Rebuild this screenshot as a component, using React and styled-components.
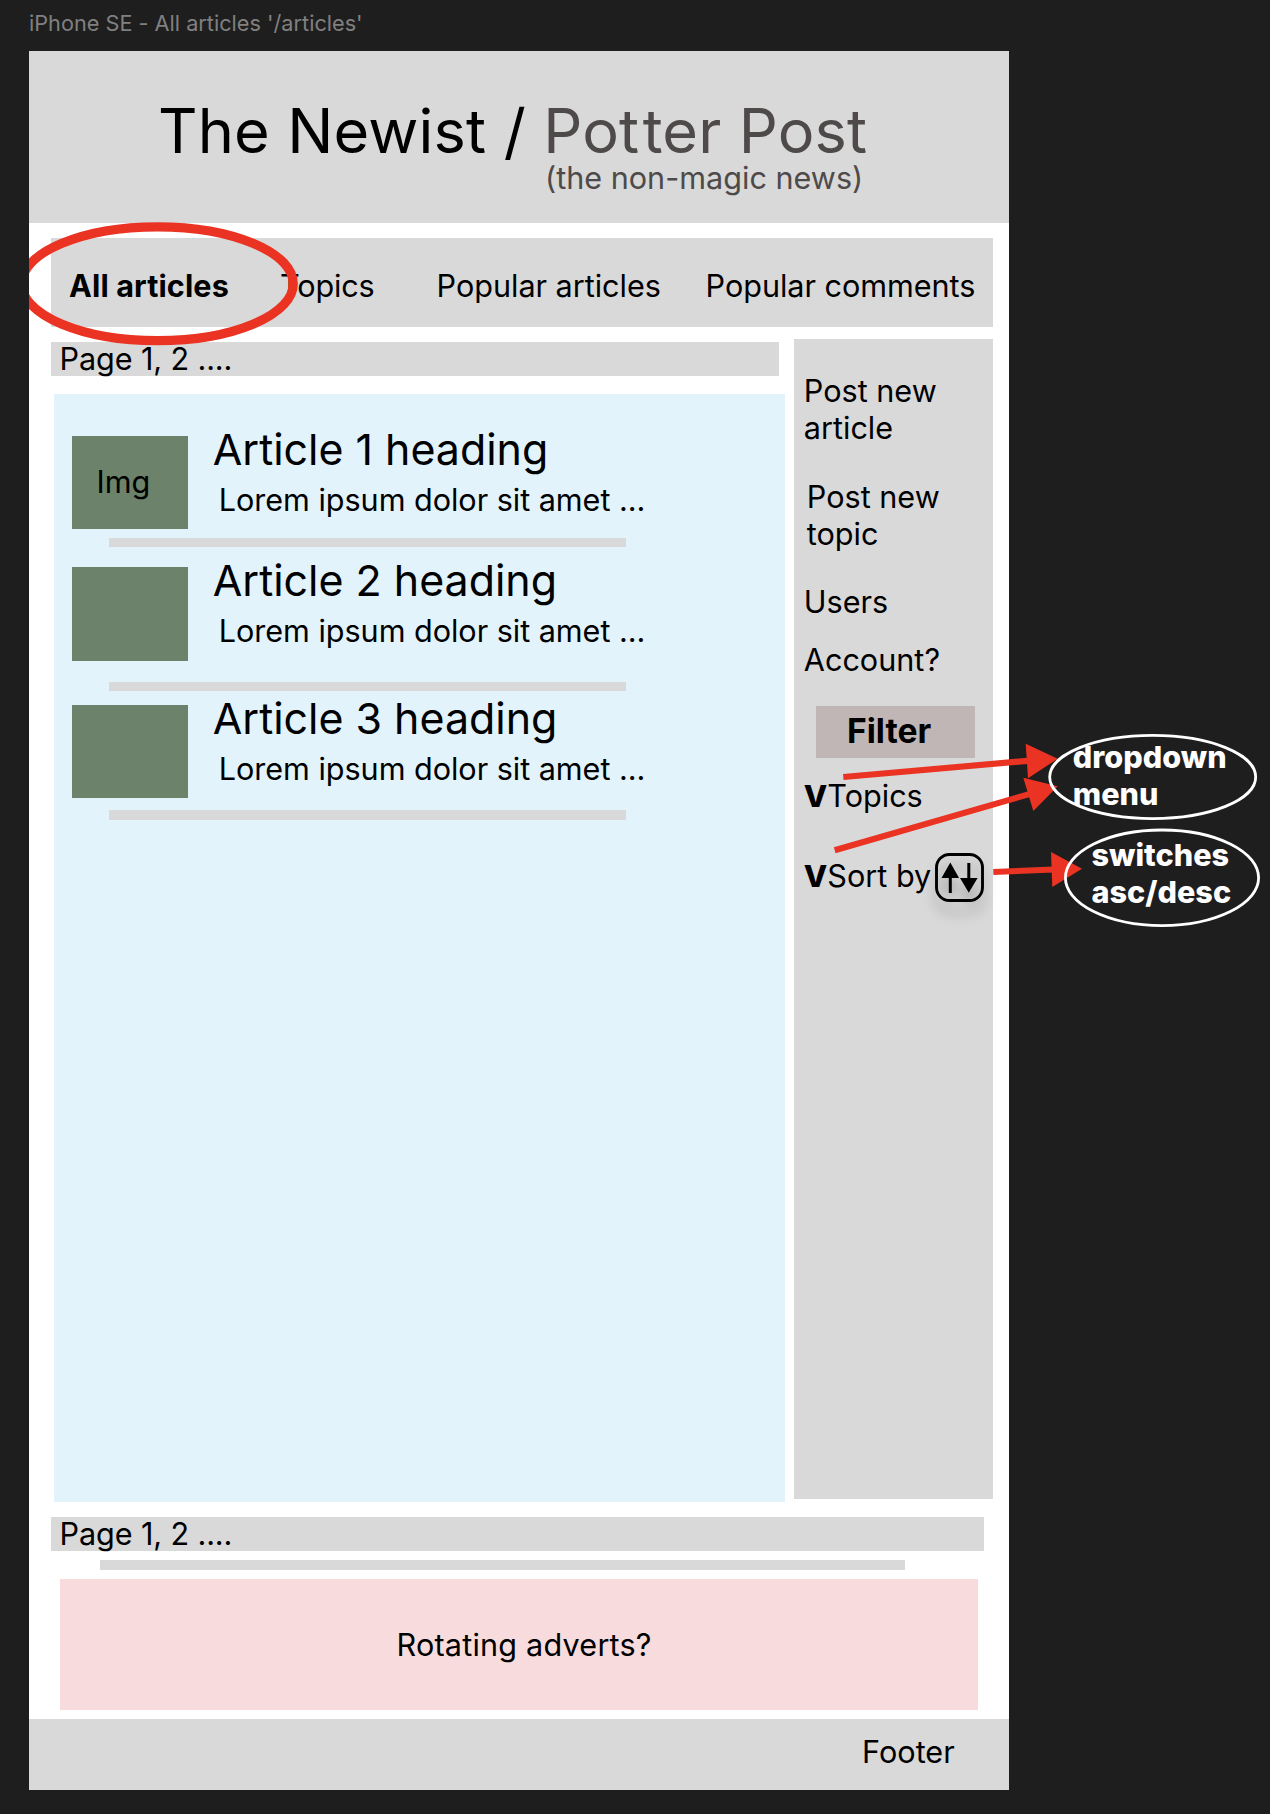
import React from "react";
import styled, { createGlobalStyle } from "styled-components";

const GlobalStyle = createGlobalStyle`
  * { box-sizing: border-box; }
  html, body { margin: 0; background: #1e1e1e; }
  body {
    font-family: Inter, "Liberation Sans", sans-serif;
    font-size: 30.6px;
    line-height: 37px;
    color: #000;
    font-optical-sizing: none;
    font-variant-ligatures: none;
  }
`;

const Canvas = styled.div`
  position: relative;
  width: 1270px;
  height: 1814px;
  padding: 10px 0 0 29px;
  overflow: hidden;
`;

const FrameLabel = styled.div`
  height: 41px;
  font-size: 21.7px;
  line-height: 26px;
  color: #808080;
  white-space: nowrap;
`;

const Frame = styled.div`
  position: relative;
  display: flex;
  flex-direction: column;
  width: 980px;
  height: 1739px;
  background: #fff;
  overflow: hidden;
`;

const Header = styled.header`
  display: flex;
  flex-direction: column;
  height: 171.7px;
  padding: 47.5px 0 0 129px;
  background: #d9d9d9;
`;

const Title = styled.h1`
  margin: 0;
  font-size: 61.25px;
  line-height: 65px;
  font-weight: 400;
  letter-spacing: 0.15px;
  white-space: nowrap;
`;

const AltTitle = styled.span`
  color: #4f4a4a;
`;

const Spaced = styled.span`
  letter-spacing: 3.6px;
`;

const Tagline = styled.div`
  margin: -4.5px 0 0 387px;
  color: #4f4a4a;
`;

const Nav = styled.nav`
  display: flex;
  align-items: center;
  height: 88.7px;
  margin: 15.3px 15.6px 0 21.6px;
  padding: 6px 0 0 18.5px;
  background: #d9d9d9;
`;

const NavItem = styled.a`
  width: ${(p) => p.$width}px;
  flex: none;
  font-weight: ${(p) => (p.$active ? 700 : 400)};
  letter-spacing: ${(p) => p.$tracking || 0}px;
  white-space: nowrap;
`;

const Body = styled.div`
  display: flex;
  justify-content: space-between;
  margin: 12.3px 15.6px 0 21.6px;
  height: 1163px;
`;

const Main = styled.main`
  display: flex;
  flex-direction: column;
  padding-top: 3px;
`;

const Pager = styled.div`
  flex: none;
  width: ${(p) => p.$width}px;
  height: 33.7px;
  margin: ${(p) => p.$margin || 0};
  padding-left: 9px;
  line-height: 33px;
  letter-spacing: -0.12px;
  background: #d9d9d9;
`;

const ArticleList = styled.section`
  width: 731px;
  height: 1108px;
  margin: 18.3px 0 0 3.4px;
  padding: 33px 0 0 18px;
  background: #e2f3fc;
`;

const Article = styled.article`
  display: flex;
  height: ${(p) => p.$height}px;
`;

const Thumb = styled.div`
  width: 116.2px;
  height: 93.5px;
  margin: 9px 24.6px 0 0;
  padding: 27px 0 0 24.5px;
  background: #6c826b;
`;

const Heading = styled.h2`
  margin: -4.3px 0 0;
  font-size: 42.9px;
  line-height: 52px;
  font-weight: 400;
`;

const Excerpt = styled.p`
  margin: 6.3px 0 0 6px;
  letter-spacing: -0.04px;
`;

const Divider = styled.div`
  flex: none;
  width: ${(p) => p.$width}px;
  height: 9.3px;
  margin: ${(p) => p.$margin};
  background: #d9d9d9;
`;

const Sidebar = styled.aside`
  display: flex;
  flex-direction: column;
  width: 199.5px;
  height: 1160.3px;
  padding: 33.2px 0 0 9.9px;
  background: #d9d9d9;
`;

const SideItem = styled.a`
  width: 150px;
  margin: 0 0 ${(p) => p.$gap}px ${(p) => p.$indent || 0}px;
`;

const FilterButton = styled.div`
  width: 159px;
  height: 52px;
  margin: 0 0 19px 12.1px;
  padding-left: 31px;
  font-size: 33.7px;
  line-height: 50px;
  font-weight: 700;
  background: #c0b6b6;
`;

const FilterRow = styled.div`
  display: flex;
  align-items: flex-start;
  height: 79.6px;
  white-space: nowrap;
`;

const Caret = styled.span`
  width: 23.5px;
  font-weight: 800;
`;

const SortIcon = styled.svg`
  flex: none;
  width: 49px;
  height: 49px;
  margin: -4px 0 0 4px;
  overflow: visible;
  filter: drop-shadow(0 12.25px 6px rgba(0, 0, 0, 0.25));
`;

const Adverts = styled.section`
  display: flex;
  flex: none;
  align-items: center;
  height: 131.3px;
  margin: 9px 31px 9.3px;
  padding: 0 0 0 336.5px;
  letter-spacing: 0.2px;
  background: #f8dcdd;
`;

const Footer = styled.footer`
  flex: 1;
  padding: 13.5px 54.3px 0 0;
  text-align: right;
  background: #d9d9d9;
`;

const Highlight = styled.svg`
  position: absolute;
  left: 0;
  top: 165px;
`;

const Notes = styled.svg`
  position: absolute;
  left: 820px;
  top: 720px;
`;

const NoteText = styled.div`
  position: absolute;
  left: ${(p) => p.$left}px;
  top: ${(p) => p.$top}px;
  color: #fff;
  font-weight: 800;
`;

const articles = [
  { title: "Article 1 heading", img: "Img", height: 111, after: 11 },
  { title: "Article 2 heading", img: "", height: 123.9, after: 4.5 },
  { title: "Article 3 heading", img: "", height: 114.3, after: 0 },
];

export default function App() {
  return (
    <Canvas>
      <GlobalStyle />
      <FrameLabel>iPhone SE - All articles '/articles'</FrameLabel>
      <Frame>
        <Header>
          <Title>
            The Newist / <AltTitle>Po<Spaced>t</Spaced>ter Post</AltTitle>
          </Title>
          <Tagline>(the non-magic news)</Tagline>
        </Header>
        <Nav>
          <NavItem $active $width={211} $tracking={0.1}>All articles</NavItem>
          <NavItem $width={156.5} $tracking={-0.2}>Topics</NavItem>
          <NavItem $width={269} $tracking={-0.03}>Popular articles</NavItem>
          <NavItem $width={270} $tracking={-0.04}>Popular comments</NavItem>
        </Nav>
        <Body>
          <Main>
            <Pager $width={728.4}>Page 1, 2 ....</Pager>
            <ArticleList>
              {articles.map((a) => (
                <React.Fragment key={a.title}>
                  <Article $height={a.height}>
                    <Thumb>{a.img}</Thumb>
                    <div>
                      <Heading>{a.title}</Heading>
                      <Excerpt>Lorem ipsum dolor sit amet ...</Excerpt>
                    </div>
                  </Article>
                  <Divider $width={517} $margin={`0 0 ${a.after}px 37px`} />
                </React.Fragment>
              ))}
            </ArticleList>
          </Main>
          <Sidebar>
            <SideItem $gap={32}>Post new article</SideItem>
            <SideItem $gap={30.5} $indent={3}>Post new topic</SideItem>
            <SideItem $gap={21}>Users</SideItem>
            <SideItem $gap={28.4}>Account?</SideItem>
            <FilterButton>Filter</FilterButton>
            <FilterRow>
              <Caret>V</Caret>Topics
            </FilterRow>
            <FilterRow>
              <Caret>V</Caret>Sort by
              <SortIcon viewBox="0 0 49 49">
                <rect x="1.5" y="1.5" width="46" height="46" rx="13" fill="none" stroke="#000" strokeWidth="2.9" />
                <path d="M15.3 25v15M33.8 10v15" stroke="#000" strokeWidth="3" />
                <path d="M15.3 9.5l8.8 15.5H6.5zM33.8 39.8L25 25h17.6z" />
              </SortIcon>
            </FilterRow>
          </Sidebar>
        </Body>
        <Pager $width={933.6} $margin="15.3px 0 0 21.6px">Page 1, 2 ....</Pager>
        <Divider $width={805} $margin="9.3px 0 0 70.7px" />
        <Adverts>Rotating adverts?</Adverts>
        <Footer>Footer</Footer>
        <Highlight width="280" height="135" viewBox="29 216 280 135">
          <ellipse cx="157.5" cy="283.7" rx="135.8" ry="56.9" fill="none" stroke="#ea3323" strokeWidth="9.2" />
        </Highlight>
      </Frame>
      <Notes width="450" height="220" viewBox="820 720 450 220">
        <g stroke="#ea3323" strokeWidth="6.1">
          <path d="M843.3 777L1030 760.6M834.7 850.3L1031 793.6M993.3 872L1054 869.5" />
        </g>
        <path
          fill="#ea3323"
          d="M1057.7 758.7L1025.7 743.7L1028 778.3zM1057.7 786.3L1023.3 777.7L1033.3 811zM1082 868.7L1051 852L1052.3 887z"
        />
        <g fill="none" stroke="#fff" strokeWidth="2.8">
          <ellipse cx="1152.7" cy="777" rx="103" ry="41.6" />
          <ellipse cx="1162" cy="877.8" rx="96.6" ry="47.8" />
        </g>
      </Notes>
      <NoteText $left={1072.8} $top={738}>dropdown<br />menu</NoteText>
      <NoteText $left={1091.5} $top={835.5}>switches<br />asc/desc</NoteText>
    </Canvas>
  );
}
